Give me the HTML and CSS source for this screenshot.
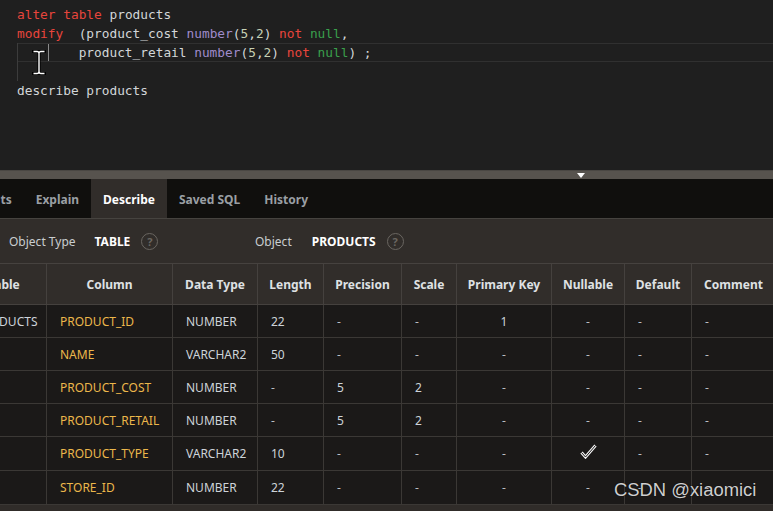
FILE: index.html
```html
<!DOCTYPE html>
<html lang="en">
<head>
<meta charset="utf-8">
<title>SQL Commands - Describe</title>
<link rel="stylesheet" href="styles.css">
</head>
<body>
<div class="app">
  <div class="editor">
    <div class="code">
      <div class="line"><span class="kw">alter</span> <span class="kw">table</span> products</div>
      <div class="line"><span class="kw">modify</span>  (product_cost <span class="ty">number</span>(<span class="nm">5</span>,<span class="nm">2</span>) <span class="kw">not</span> <span class="nl">null</span>,</div>
      <div class="line guide active">        product_retail <span class="ty">number</span>(<span class="nm">5</span>,<span class="nm">2</span>) <span class="kw">not</span> <span class="nl">null</span>) ;<span class="caret"></span></div>
      <div class="line guide"> </div>
      <div class="line">describe products</div>
    </div>
    <svg class="ibeam" width="14" height="25" viewBox="0 0 14 25" aria-hidden="true">
      <path d="M1.5 1.5 H5 Q7 1.5 7 3.5 Q7 1.5 9 1.5 H12.5 M7 3.5 V21.5 M1.5 23.5 H5 Q7 23.5 7 21.5 Q7 23.5 9 23.5 H12.5" fill="none" stroke="#000" stroke-width="3.2" stroke-linecap="square"/>
      <path d="M1.5 1.5 H5 Q7 1.5 7 3.5 Q7 1.5 9 1.5 H12.5 M7 3.5 V21.5 M1.5 23.5 H5 Q7 23.5 7 21.5 Q7 23.5 9 23.5 H12.5" fill="none" stroke="#fff" stroke-width="1.4"/>
    </svg>
  </div>

  <div class="splitter"><span class="handle"></span></div>

  <div class="tabs">
    <div class="tab">Results</div>
    <div class="tab">Explain</div>
    <div class="tab active">Describe</div>
    <div class="tab">Saved SQL</div>
    <div class="tab">History</div>
  </div>

  <div class="objrow">
    <div class="objgroup first">
      <span class="objlabel">Object Type</span>
      <span class="objvalue">TABLE</span>
      <span class="help">?</span>
    </div>
    <div class="objgroup">
      <span class="objlabel">Object</span>
      <span class="objvalue">PRODUCTS</span>
      <span class="help">?</span>
    </div>
  </div>

  <div class="grid-wrap">
    <table class="desc">
      <thead>
        <tr>
          <th class="w-table">Table</th>
          <th class="w-column">Column</th>
          <th class="w-type">Data Type</th>
          <th class="w-len">Length</th>
          <th class="w-prec">Precision</th>
          <th class="w-scale">Scale</th>
          <th class="w-pk">Primary Key</th>
          <th class="w-null">Nullable</th>
          <th class="w-def">Default</th>
          <th class="w-com">Comment</th>
        </tr>
      </thead>
      <tbody>
        <tr>
          <td>PRODUCTS</td><td class="colname">PRODUCT_ID</td><td>NUMBER</td><td>22</td><td class="dash">-</td><td class="dash">-</td><td class="c">1</td><td class="c dash">-</td><td class="dash">-</td><td class="dash">-</td>
        </tr>
        <tr>
          <td></td><td class="colname">NAME</td><td>VARCHAR2</td><td>50</td><td class="dash">-</td><td class="dash">-</td><td class="c dash">-</td><td class="c dash">-</td><td class="dash">-</td><td class="dash">-</td>
        </tr>
        <tr>
          <td></td><td class="colname">PRODUCT_COST</td><td>NUMBER</td><td class="dash">-</td><td>5</td><td>2</td><td class="c dash">-</td><td class="c dash">-</td><td class="dash">-</td><td class="dash">-</td>
        </tr>
        <tr>
          <td></td><td class="colname">PRODUCT_RETAIL</td><td>NUMBER</td><td class="dash">-</td><td>5</td><td>2</td><td class="c dash">-</td><td class="c dash">-</td><td class="dash">-</td><td class="dash">-</td>
        </tr>
        <tr class="tall">
          <td></td><td class="colname">PRODUCT_TYPE</td><td>VARCHAR2</td><td>10</td><td class="dash">-</td><td class="dash">-</td><td class="c dash">-</td>
          <td class="c"><svg class="check" width="17" height="15" viewBox="0 0 17 15" aria-hidden="true"><path d="M1.5 8.5 L5.5 13 L15.5 1.5" fill="none" stroke="#f2f2f2" stroke-width="3" stroke-linejoin="miter"/><path d="M1.5 8.5 L5.5 13 L15.5 1.5" fill="none" stroke="#1b1918" stroke-width="1"/></svg></td>
          <td class="dash">-</td><td class="dash">-</td>
        </tr>
        <tr class="tall">
          <td></td><td class="colname">STORE_ID</td><td>NUMBER</td><td>22</td><td class="dash">-</td><td class="dash">-</td><td class="c dash">-</td><td class="c dash">-</td><td class="dash">-</td><td class="dash">-</td>
        </tr>
      </tbody>
    </table>
  </div>
  <div class="footer-strip"></div>

  <div class="watermark">CSDN @xiaomici</div>
</div>
</body>
</html>
```

FILE: styles.css
```css
* {
  box-sizing: border-box;
}

html, body {
  margin: 0;
  padding: 0;
  background: #1e1e1e;
}

.app {
  position: relative;
  width: 773px;
  height: 511px;
  overflow: hidden;
  display: flex;
  flex-direction: column;
  font-family: "Noto Sans", "Open Sans", sans-serif;
}

/* ---------- editor ---------- */
.editor {
  position: relative;
  height: 170px;
  flex: none;
  background: #1f1f1f;
  padding-top: 5px;
}

.code {
  font-family: "DejaVu Sans Mono", "Liberation Mono", monospace;
  font-size: 12.8px;
  line-height: 19px;
  color: #d2d6d8;
}

.line {
  position: relative;
  margin-left: 17px;
  height: 19px;
  white-space: pre;
}

.line.guide {
  box-shadow: inset 1px 0 0 #3c3c3c;
}

.line.active {
  box-shadow: inset 1px 0 0 #3c3c3c, inset 0 1px 0 #303030, inset 0 -1px 0 #303030;
}

.kw { color: #e8453c; }
.ty { color: #9f8bcb; }
.nm { color: #c6d0b4; }
.nl { color: #3a9f4c; }

.caret {
  position: absolute;
  left: 31px;
  top: 1px;
  width: 1px;
  height: 17px;
  background: #8a8a8a;
}

.ibeam {
  position: absolute;
  left: 32px;
  top: 50px;
}

/* ---------- splitter ---------- */
.splitter {
  height: 9px;
  flex: none;
  background: #57534e;
  border-top: 1px solid #4a4743;
  padding-left: 577px;
  padding-top: 2px;
}

.handle {
  display: block;
  width: 0;
  height: 0;
  border-left: 4px solid transparent;
  border-right: 4px solid transparent;
  border-top: 5px solid #ffffff;
}

/* ---------- tabs ---------- */
.tabs {
  height: 40px;
  flex: none;
  display: flex;
  background: #100f0d;
  border-bottom: 1px solid #46433f;
  margin-left: -44px;
}

.tab {
  padding: 1px 12px 0 12px;
  display: flex;
  align-items: center;
  font-size: 12px;
  font-weight: 700;
  color: #9a9fa4;
  white-space: nowrap;
}

.tab.active {
  background: #312d2a;
  color: #ffffff;
}

/* ---------- object row ---------- */
.objrow {
  height: 45px;
  flex: none;
  display: flex;
  align-items: center;
  background: #312d2a;
  border-bottom: 1px solid #46423f;
  padding-left: 9px;
  font-size: 12px;
}

.objgroup {
  display: flex;
  align-items: center;
}

.objgroup.first {
  width: 246px;
}

.objlabel {
  color: #c9cdd0;
}

.objgroup.first .objlabel {
  margin-right: 19px;
}

.objgroup:not(.first) .objlabel {
  margin-right: 20px;
}

.objvalue {
  color: #ffffff;
  font-weight: 700;
  margin-right: 11px;
}

.help {
  width: 17px;
  height: 17px;
  border: 1.5px solid #6a6661;
  border-radius: 50%;
  display: flex;
  align-items: center;
  justify-content: center;
  color: #6a6661;
  font-size: 11px;
  font-weight: 700;
  line-height: 1;
}

/* ---------- describe grid ---------- */
.grid-wrap {
  flex: none;
  overflow: hidden;
  background: #1b1918;
}

.desc {
  margin-left: -38px;
  border-collapse: separate;
  border-spacing: 0;
  table-layout: fixed;
  width: 814px;
  font-size: 12px;
}

.desc th {
  height: 41px;
  background: #312d2a;
  color: #dfe1e3;
  font-weight: 700;
  text-align: center;
  padding: 0 6px;
  border-right: 1px solid #45413e;
  border-bottom: 1px solid #45413e;
  white-space: nowrap;
}

.desc td {
  height: 33px;
  padding: 0 13px;
  color: #cdd3d9;
  border-right: 1px solid #3b3835;
  border-bottom: 1px solid #3b3835;
  white-space: nowrap;
  vertical-align: middle;
}

.desc tr.tall td {
  height: 34px;
}

.desc td.c {
  text-align: center;
  padding: 0;
}

.desc td.colname {
  color: #ecb74b;
}

.desc td.dash {
  color: #b9bdc1;
}

.check {
  display: inline-block;
  vertical-align: middle;
  margin-top: -6px;
}

.w-table { width: 85px; }
.w-column { width: 126px; }
.w-type { width: 85px; }
.w-len { width: 66px; }
.w-prec { width: 78px; }
.w-scale { width: 55px; }
.w-pk { width: 95px; }
.w-null { width: 73px; }
.w-def { width: 67px; }
.w-com { width: 84px; }

.footer-strip {
  flex: 1;
  background: #302c29;
}

/* ---------- watermark ---------- */
.watermark {
  position: absolute;
  left: 614px;
  top: 479px;
  font-family: "Liberation Sans", Arial, sans-serif;
  font-size: 18.4px;
  line-height: 21px;
  color: #cfcfcf;
  text-shadow: 0 0 1px #000000;
  white-space: nowrap;
}
```
